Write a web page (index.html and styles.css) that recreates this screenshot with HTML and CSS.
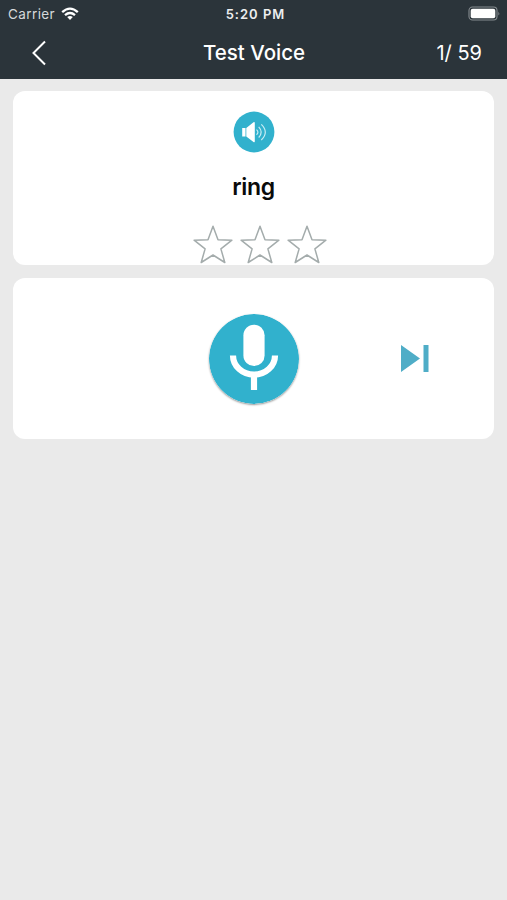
FILE: index.html
```html
<!DOCTYPE html>
<html lang="en">
<head>
<meta charset="utf-8">
<title>Test Voice</title>
<link rel="stylesheet" href="styles.css">
</head>
<body>
<header class="header">
  <div class="status">
    <div class="carrier"><span>Carrier</span>
      <svg class="wifi" width="18" height="14" viewBox="0 0 18 14" fill="none" stroke="#fff" stroke-width="2.3"><path d="M1.2 5.2Q9-2 16.8 5.2M4 8.2q5-4.3 10 0"/><path d="M6.2 10.1q2.8-2.3 5.6 0L9 12.9z" fill="#fff" stroke="none"/></svg>
    </div>
    <div class="time">5:20 PM</div>
    <svg class="battery" width="33" height="16" viewBox="0 0 33 16"><rect x="1" y="1" width="28" height="13" rx="3.5" fill="none" stroke="#858b8f" stroke-width="1.1"/><rect x="2.7" y="2.7" width="24.6" height="9.6" rx="2" fill="#fff"/><path d="M30.4 5.5q1.8 2 0 4z" fill="#858b8f"/></svg>
  </div>
  <nav class="nav">
    <svg class="back" width="16" height="26" viewBox="0 0 16 26"><path d="M14 1.5 2.5 13 14 24.5" fill="none" stroke="#fff" stroke-width="2"/></svg>
    <h1 class="title">Test Voice</h1>
    <span class="count">1/ 59</span>
  </nav>
</header>
<main class="content">
  <section class="card word-card">
    <svg class="speaker" width="42" height="42" viewBox="0 0 42 42"><circle cx="21" cy="21" r="20.4" fill="#31b1cd"/><path d="M9.2 17h3.3v8.500H9.200zM13.300 17l7.200-5.700q1.300-.7 1.300.8v18.200q0 1.500-1.300.8l-7.200-5.600z" fill="#fff"/><path d="M23.500 18.600q2.800 2.600 0 5.200M25.700 15.900q5 5.300 0 10.600M28.300 13.400q8 7.800 0 15.600" fill="none" stroke="#c9edf4" stroke-width="1.200"/></svg>
    <p class="word">ring</p>
    <div class="stars">
      <svg class="star" viewBox="0 0 40 39"><path d="M20 1.300 25 14.700 38.900 15.200 27.900 23.900 31.800 37.500 20 30 8.200 37.500 12.100 23.900 1.100 15.200 15 14.700Z"/></svg>
      <svg class="star" viewBox="0 0 40 39"><path d="M20 1.300 25 14.700 38.900 15.200 27.900 23.900 31.800 37.500 20 30 8.200 37.500 12.100 23.900 1.100 15.200 15 14.700Z"/></svg>
      <svg class="star" viewBox="0 0 40 39"><path d="M20 1.300 25 14.700 38.900 15.200 27.900 23.900 31.800 37.500 20 30 8.200 37.500 12.100 23.900 1.100 15.200 15 14.700Z"/></svg>
    </div>
  </section>
  <section class="card record-card">
    <svg class="mic" width="90" height="90" viewBox="0 0 90 90"><circle cx="45" cy="45" r="45" fill="#31b1cd"/><rect x="34.4" y="10.7" width="21.2" height="41.3" rx="10.6" fill="#fff"/><path d="M24 41.500a21 19.200 0 0 0 42 0M45 60v16" fill="none" stroke="#fff" stroke-width="6.200"/></svg>
    <svg class="next" width="28" height="27" viewBox="0 0 28 27" fill="#4fadc7"><path d="M0 0 19 13.500 0 27zM22.500 0h5v27h-5z"/></svg>
  </section>
</main>
</body>
</html>
```
FILE: styles.css
```css
* { box-sizing: border-box; }
body {
  margin: 0;
  min-height: 900px;
  background: #eaeaea;
  font-family: Inter, "Liberation Sans", sans-serif;
}
svg { display: block; }
.header {
  height: 79px;
  background: #2b343a;
  color: #fff;
}
.status {
  display: grid;
  grid-template-columns: 1fr auto 1fr;
  align-items: center;
  height: 27px;
  padding: 0 6px 0 8px;
}
.carrier {
  display: flex;
  align-items: center;
  gap: 6px;
  font-size: 13.5px;
  color: #d5d9db;
  letter-spacing: 0.4px;
}
.time {
  margin-left: 2px;
  font-size: 13px;
  font-weight: 600;
  letter-spacing: 1px;
  color: #eceeef;
}
.battery { justify-self: end; }
.nav {
  display: grid;
  grid-template-columns: 1fr auto 1fr;
  align-items: center;
  height: 51px;
  padding: 0 25px 0 31px;
}
.title {
  margin: 0 5px 0 0;
  font-size: 20.5px;
  font-weight: 500;
  line-height: 26px;
}
.count {
  justify-self: end;
  font-size: 20px;
  line-height: 26px;
}
.content {
  display: flex;
  flex-direction: column;
  gap: 13px;
  padding: 12px 13px;
}
.card {
  background: #fff;
  border-radius: 12px;
}
.word-card {
  display: flex;
  flex-direction: column;
  align-items: center;
  height: 174px;
  padding-top: 20px;
}
.word {
  margin: 19px 0 0;
  font-size: 23px;
  font-weight: 600;
  line-height: 30px;
  letter-spacing: -0.3px;
  color: #0a0a0a;
}
.stars {
  display: flex;
  gap: 6.7px;
  margin: 23px 0 0 13px;
}
.star {
  width: 40px;
  height: 39px;
  fill: none;
  stroke: #a4acac;
  stroke-width: 1.5;
  stroke-linejoin: round;
}
.record-card {
  display: grid;
  grid-template-columns: 1fr auto 1fr;
  align-items: center;
  height: 161px;
}
.mic {
  grid-column: 2;
  border-radius: 50%;
  box-shadow: 0 1px 2px rgba(0, 0, 0, 0.4);
}
.next { margin-left: 102px; }
```
